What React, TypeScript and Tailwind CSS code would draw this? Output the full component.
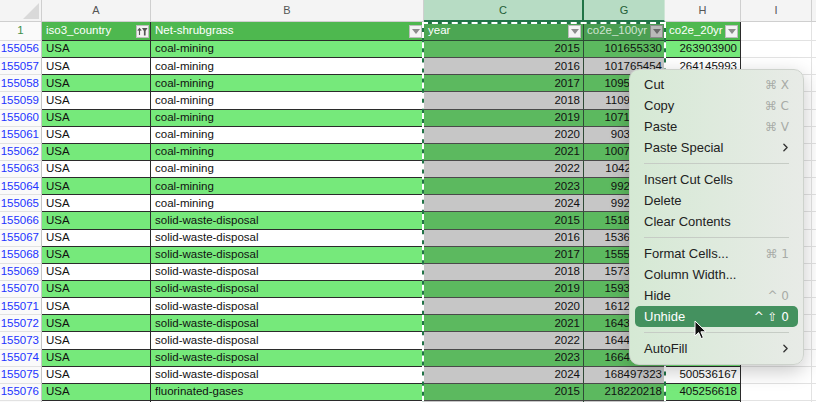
import { ChevronRight } from "lucide-react";

type Row = [number, string, number, string, string];

const ROWS: Row[] = [
  [155056, "coal-mining", 2015, "101655330", "263903900"],
  [155057, "coal-mining", 2016, "101765454", "264145993"],
  [155058, "coal-mining", 2017, "109521744", "266018421"],
  [155059, "coal-mining", 2018, "110947361", "268874512"],
  [155060, "coal-mining", 2019, "107126583", "262150937"],
  [155061, "coal-mining", 2020, "90312475", "231884609"],
  [155062, "coal-mining", 2021, "100734218", "249307762"],
  [155063, "coal-mining", 2022, "104211906", "256498113"],
  [155064, "coal-mining", 2023, "99268341", "247715026"],
  [155065, "coal-mining", 2024, "99241870", "247652314"],
  [155066, "solid-waste-disposal", 2015, "151804529", "449863210"],
  [155067, "solid-waste-disposal", 2016, "153612087", "455102348"],
  [155068, "solid-waste-disposal", 2017, "155580342", "461027719"],
  [155069, "solid-waste-disposal", 2018, "157319466", "466180395"],
  [155070, "solid-waste-disposal", 2019, "159356210", "472214870"],
  [155071, "solid-waste-disposal", 2020, "161249083", "477832146"],
  [155072, "solid-waste-disposal", 2021, "164327751", "486951402"],
  [155073, "solid-waste-disposal", 2022, "164418629", "487219553"],
  [155074, "solid-waste-disposal", 2023, "166483215", "493337908"],
  [155075, "solid-waste-disposal", 2024, "168497323", "500536167"],
  [155076, "fluorinated-gases", 2015, "218220218", "405256618"],
  [155077, "fluorinated-gases", 2016, "221904316", "411820937"],
];

type MenuItem = { label: string; keys?: string; sub?: boolean; active?: boolean } | "sep";

const MENU: MenuItem[] = [
  { label: "Cut", keys: "⌘ X" },
  { label: "Copy", keys: "⌘ C" },
  { label: "Paste", keys: "⌘ V" },
  { label: "Paste Special", sub: true },
  "sep",
  { label: "Insert Cut Cells" },
  { label: "Delete" },
  { label: "Clear Contents" },
  "sep",
  { label: "Format Cells...", keys: "⌘ 1" },
  { label: "Column Width..." },
  { label: "Hide", keys: "^ 0" },
  { label: "Unhide", keys: "^ ⇧ 0", active: true },
  "sep",
  { label: "AutoFill", sub: true },
];

function FilterButton({ dark, sorted }: { dark?: boolean; sorted?: boolean }) {
  return (
    <div
      className={`flex h-[13px] w-[13px] shrink-0 items-center justify-center border ${
        dark ? "border-[#8a8a8a] bg-[#b9b9b9]" : "border-[#bdbdbd] bg-[#f3f3f3]"
      }`}
    >
      {sorted ? (
        <svg width="11" height="9" viewBox="0 0 11 9">
          <path d="M2.5 8V2M0.8 3.6 2.5 1.6 4.2 3.6" stroke="#555" strokeWidth="1.1" fill="none" />
          <path d="M5 1h5.5L8.6 4v4.5H6.9V4z" fill="#555" />
        </svg>
      ) : (
        <svg width="8" height="5" viewBox="0 0 8 5">
          <path d="M0 0h8L4 5z" fill={dark ? "#6a6a6a" : "#8c8c8c"} />
        </svg>
      )}
    </div>
  );
}

export default function App() {
  return (
    <div className="relative h-[402px] w-[816px] overflow-hidden bg-white font-['Liberation_Sans',Arial,sans-serif] text-[11.5px] text-[#111]">
      {/* column letters */}
      <div className="flex h-[22px] text-[11px] text-[#555]">
        <div className="flex w-[42px] shrink-0 items-end justify-end border-r border-b border-[#cfcfcf] bg-[#f4f4f4] pr-[2px] pb-[2px]">
          <svg width="16" height="16" viewBox="0 0 16 16">
            <path d="M16 0V16H0z" fill="#d9d9d9" />
          </svg>
        </div>
        <div className="flex w-[109px] shrink-0 items-center justify-center border-r border-b border-[#cfcfcf] bg-[#f4f4f4]">A</div>
        <div className="flex w-[273px] shrink-0 items-center justify-center border-r border-b border-[#cfcfcf] bg-[#f4f4f4]">B</div>
        <div className="flex w-[160px] shrink-0 items-center justify-center border-r-2 border-b-2 border-[#217346] bg-[#b7dcc4] text-[#1f5e37]">C</div>
        <div className="flex w-[81px] shrink-0 items-center justify-center border-r border-b-2 border-r-[#cfe6d6] border-b-[#217346] bg-[#b7dcc4] text-[#1f5e37]">G</div>
        <div className="flex w-[76px] shrink-0 items-center justify-center border-r border-b border-[#cfcfcf] bg-[#f4f4f4]">H</div>
        <div className="flex w-[71px] shrink-0 items-center justify-center border-r border-b border-[#cfcfcf] bg-[#f4f4f4]">I</div>
        <div className="flex-1 border-b border-[#cfcfcf] bg-[#f4f4f4]" />
      </div>

      {/* header row 1 */}
      <div className="flex h-[19px]">
        <div className="flex w-[42px] shrink-0 items-center justify-center border-r border-b border-r-[#c4c4c4] border-b-[#dedede] bg-[#fafafa] text-[#3f8f4a]">1</div>
        <div className="flex w-[109px] shrink-0 items-center justify-between border-r border-b border-[#2b2b2b] bg-[#4eb84f] pr-[1px] pl-[4px] text-white">
          <span>iso3_country</span>
          <FilterButton sorted />
        </div>
        <div className="flex w-[273px] shrink-0 items-center justify-between border-r border-b border-[#2b2b2b] bg-[#4eb84f] pr-[1px] pl-[4px] text-white">
          <span>Net-shrubgrass</span>
          <FilterButton />
        </div>
        <div className="flex w-[160px] shrink-0 items-center justify-between border-r border-b border-[#2b4a33] bg-[#4ca653] pr-[2px] pl-[4px] text-white">
          <span>year</span>
          <FilterButton />
        </div>
        <div className="flex w-[81px] shrink-0 items-center justify-between border-b border-[#2b4a33] bg-[#4a9e52] pr-[2px] pl-[3px] text-[#cfe4d1]">
          <span>co2e_100yr</span>
          <FilterButton dark />
        </div>
        <div className="flex w-[76px] shrink-0 items-center justify-between border-r border-b border-[#2b2b2b] bg-[#4eb84f] pr-[2px] pl-[4px] text-white">
          <span>co2e_20yr</span>
          <FilterButton />
        </div>
        <div className="w-[71px] shrink-0 border-r border-b border-[#e2e2e2]" />
        <div className="flex-1 border-b border-[#e2e2e2]" />
      </div>

      {ROWS.map(([n, sector, year, g, h], i) => {
        const green = i % 2 === 0;
        return (
          <div key={n} className="flex h-[17.15px]">
            <div className="flex w-[42px] shrink-0 items-center justify-end border-r border-b border-r-[#c4c4c4] border-b-[#e2e2e2] bg-[#fafafa] pr-[2px] text-[#2233ff]">
              {n}
            </div>
            <div className={`flex w-[109px] shrink-0 items-center border-r border-b border-[#2b2b2b] pl-[4px] ${green ? "bg-[#76e97b]" : "bg-white"}`}>
              USA
            </div>
            <div className={`flex w-[273px] shrink-0 items-center border-r border-b border-[#2b2b2b] pl-[4px] ${green ? "bg-[#76e97b]" : "bg-white"}`}>
              {sector}
            </div>
            <div className={`flex w-[160px] shrink-0 items-center justify-end border-r border-b border-r-[#2f4a36] border-b-[#4a4a4a] pr-[3px] ${green ? "bg-[#5cb95f]" : "bg-[#c6c6c6]"}`}>
              {year}
            </div>
            <div className={`flex w-[81px] shrink-0 items-center justify-end border-b border-[#4a4a4a] pr-[3px] ${green ? "bg-[#5cb95f]" : "bg-[#c6c6c6]"}`}>
              {g}
            </div>
            <div className={`flex w-[76px] shrink-0 items-center justify-end border-r border-b border-[#2b2b2b] pr-[3px] ${green ? "bg-[#76e97b]" : "bg-white"}`}>
              {h}
            </div>
            <div className="w-[71px] shrink-0 border-r border-b border-[#e2e2e2]" />
            <div className="flex-1 border-b border-[#e2e2e2]" />
          </div>
        );
      })}

      {/* copy marquee around C:G */}
      <div className="absolute top-[22px] left-[422px] h-[400px] w-[244px] border-2 border-[#217346]" />
      <div className="absolute top-[22px] left-[422px] h-[400px] w-[244px] border-2 border-dashed border-white" />

      {/* context menu */}
      <div className="absolute top-[69px] left-[629px] w-[175px] rounded-[10px] border border-[#cdd2cc] bg-linear-to-r from-[#d5e9d4] to-[#e8ebe7] px-[5px] pt-[4px] pb-[5px] font-['Liberation_Sans','DejaVu_Sans',sans-serif] text-[13px] text-[#222] shadow-[0_6px_20px_rgba(0,0,0,0.22)]">
        {MENU.map((item, i) =>
          item === "sep" ? (
            <div key={i} className="mx-[9px] my-[5px] h-px bg-[#c6ccc5]" />
          ) : (
            <div
              key={item.label}
              className={`flex h-[21px] items-center justify-between rounded-[5px] px-[9px] ${
                item.active ? "bg-[#44915f] text-white" : ""
              }`}
            >
              <span>{item.label}</span>
              {item.keys && (
                <span className={`font-['DejaVu_Sans',sans-serif] text-[12px] ${item.active ? "text-white" : "text-[#a8aba7]"}`}>
                  {item.keys}
                </span>
              )}
              {item.sub && <ChevronRight size={13} strokeWidth={2.5} className="mr-[-3px] text-[#333]" />}
            </div>
          )
        )}
      </div>

      {/* mouse pointer */}
      <svg className="absolute top-[320px] left-[694px]" width="13" height="20" viewBox="0 0 13 20">
        <path d="M1 1v15l3.6-3.4 2.6 6 2.2-1-2.5-5.8H12z" fill="#111" stroke="#fff" strokeWidth="1" strokeLinejoin="round" />
      </svg>
    </div>
  );
}
